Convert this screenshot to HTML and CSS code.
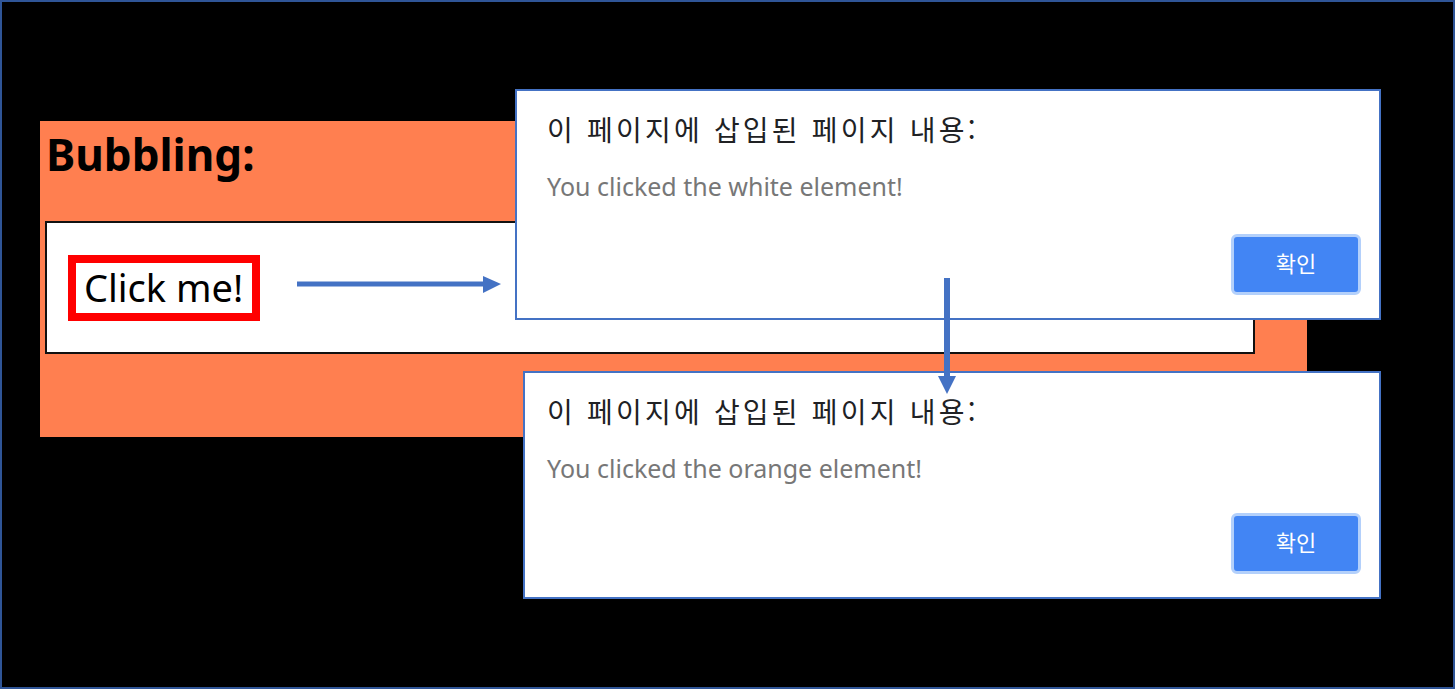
FILE: index.html
```html
<!DOCTYPE html>
<html lang="ko">
<head>
<meta charset="utf-8">
<title>Bubbling</title>
<link rel="stylesheet" href="styles.css">
</head>
<body>
<div class="stage">
  <div class="orange">
    <h1 class="heading">Bubbling:</h1>
    <div class="white">
      <div class="clickme">Click me!</div>
    </div>
  </div>

  <svg class="arrow-h" width="210" height="20" viewBox="0 0 210 20">
    <rect x="0" y="6.5" width="190" height="5" fill="#4472c4"/>
    <polygon points="186,1 204,9 186,18" fill="#4472c4"/>
  </svg>

  <div class="dialog dialog-1">
    <div class="d-title">이 페이지에 삽입된 페이지 내용:</div>
    <div class="d-msg">You clicked the white element!</div>
    <div class="d-actions"><button class="d-btn">확인</button></div>
  </div>

  <div class="dialog dialog-2">
    <div class="d-title">이 페이지에 삽입된 페이지 내용:</div>
    <div class="d-msg">You clicked the orange element!</div>
    <div class="d-actions"><button class="d-btn">확인</button></div>
  </div>

  <svg class="arrow-v" width="20" height="118" viewBox="0 0 20 118">
    <rect x="7" y="0" width="6" height="100" fill="#4472c4"/>
    <polygon points="1,98 19,98 10,116" fill="#4472c4"/>
  </svg>
</div>
</body>
</html>
```

FILE: styles.css
```css
html, body {
  margin: 0;
  padding: 0;
  background: #000;
}
.stage {
  position: relative;
  box-sizing: border-box;
  width: 1455px;
  height: 689px;
  background: #000;
  border: 2px solid #2f5597;
  overflow: hidden;
  font-family: "Noto Sans", "Noto Sans CJK KR", sans-serif;
}
.orange {
  margin: 119px 0 0 38px;
  width: 1267px;
  height: 316px;
  background: #ff7f50;
  box-sizing: border-box;
  padding-left: 5px;
  display: flex;
  flex-direction: column;
}
.heading {
  margin: 0;
  height: 100px;
  padding-left: 1px;
  font-size: 44px;
  font-weight: 700;
  line-height: 66px;
  color: #000;
}
.white {
  box-sizing: border-box;
  width: 1210px;
  height: 133px;
  background: #fff;
  border: 2px solid #111;
  padding: 32px 0 0 21px;
}
.clickme {
  box-sizing: border-box;
  width: 192px;
  height: 66px;
  border: 8px solid #ff0000;
  font-size: 38px;
  line-height: 48px;
  padding-left: 8px;
  color: #000;
  white-space: nowrap;
}
.dialog {
  position: absolute;
  box-sizing: border-box;
  background: #fff;
  border: 2px solid #4472c4;
  display: flex;
  flex-direction: column;
  padding: 0 18px 0 30px;
}
.dialog-1 {
  left: 513px;
  top: 87px;
  width: 866px;
  height: 231px;
}
.dialog-2 {
  left: 521px;
  top: 369px;
  width: 858px;
  height: 228px;
  padding-left: 22px;
}
.d-title {
  margin-top: 18px;
  font-family: "Noto Sans CJK KR", sans-serif;
  font-size: 28px;
  letter-spacing: 3.2px;
  line-height: 40px;
  color: #202124;
  white-space: nowrap;
}
.d-msg {
  margin-top: 20px;
  font-size: 25px;
  line-height: 34px;
  color: #777;
  white-space: nowrap;
}
.d-actions {
  margin-top: auto;
  margin-bottom: 23px;
  display: flex;
  justify-content: flex-end;
}
.d-btn {
  box-sizing: border-box;
  width: 130px;
  height: 61px;
  background: #4285f4;
  border: 3px solid #b3d0fb;
  border-radius: 6px;
  color: #fff;
  font-family: "Noto Sans CJK KR", sans-serif;
  font-size: 22px;
  line-height: 1;
  padding: 0 0 5px 0;
}
.arrow-h {
  position: absolute;
  left: 295px;
  top: 273px;
}
.arrow-v {
  position: absolute;
  left: 935px;
  top: 276px;
}
```
